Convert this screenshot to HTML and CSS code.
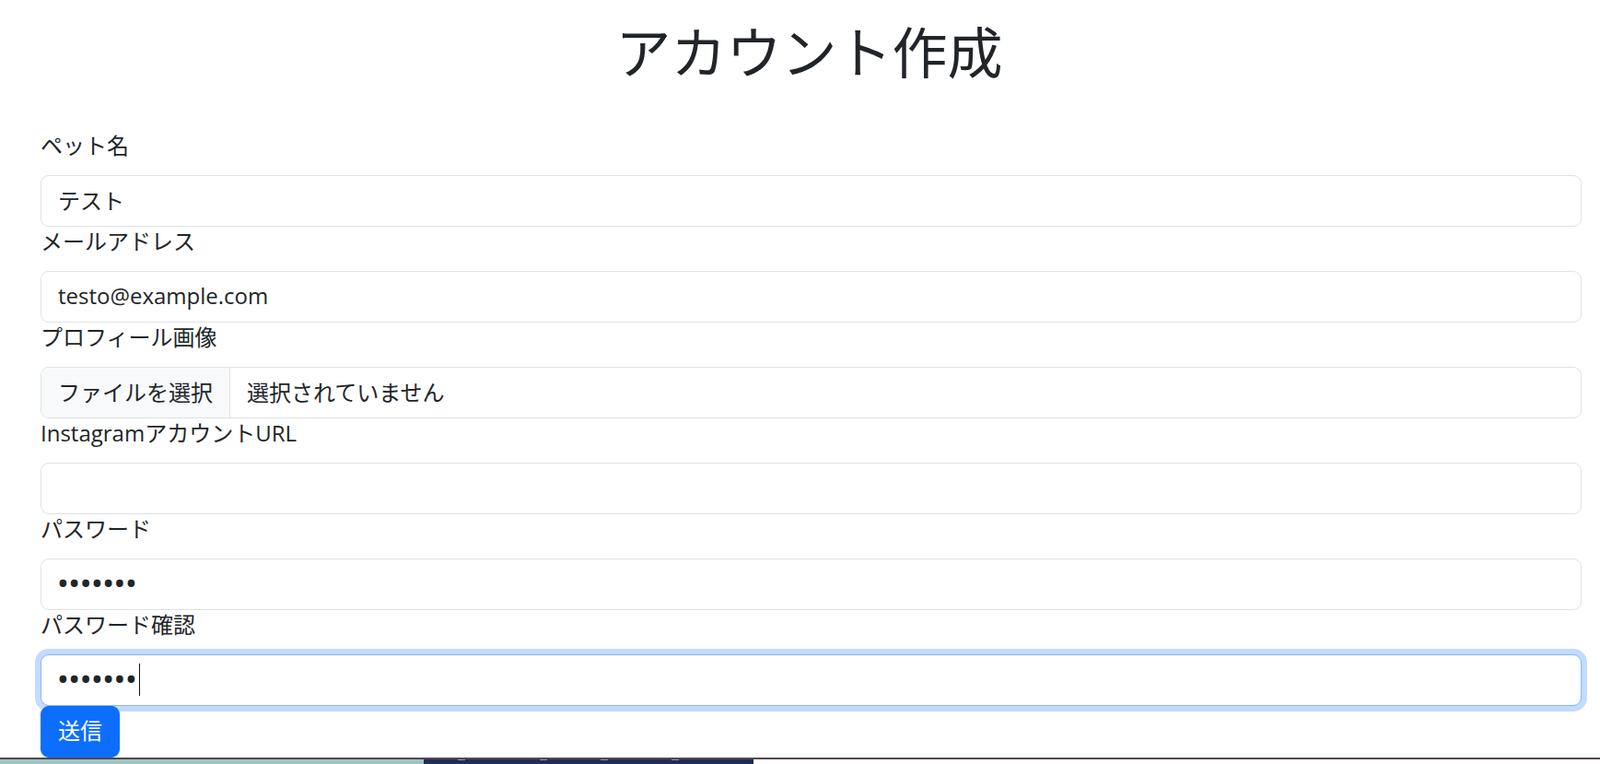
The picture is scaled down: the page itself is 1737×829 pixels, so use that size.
FILE: index.html
```html
<!DOCTYPE html>
<html lang="ja">
<head>
<meta charset="utf-8">
<title>アカウント作成</title>
<link rel="stylesheet" href="styles.css">
</head>
<body>
<h1 class="title">アカウント作成</h1>
<form class="form">
  <label class="label">ペット名</label>
  <input class="control" type="text" value="テスト">
  <label class="label">メールアドレス</label>
  <input class="control" type="email" value="testo@example.com">
  <label class="label">プロフィール画像</label>
  <div class="control file-input">
    <span class="file-btn">ファイルを選択</span>
    <span class="file-name">選択されていません</span>
  </div>
  <label class="label">InstagramアカウントURL</label>
  <input class="control" type="url" value="">
  <label class="label">パスワード</label>
  <input class="control pw" type="password" value="1234567">
  <label class="label">パスワード確認</label>
  <div class="focus-wrap">
    <input class="control pw focused" type="password" value="1234567">
    <span class="caret"></span>
  </div>
  <button class="btn" type="button">送信</button>
</form>
<div class="taskbar">
  <div class="tb-line"></div>
  <div class="tb-row">
    <div class="tb-teal"></div>
    <div class="tb-navy">
      <i class="m1"></i><i class="m2"></i><i class="m3"></i><i class="m4"></i>
    </div>
  </div>
</div>
</body>
</html>
```
FILE: styles.css
```css
html, body {
  margin: 0;
  padding: 0;
  background: #fff;
}
body {
  font-family: "Open Sans", "Noto Sans CJK JP", sans-serif;
  color: #212529;
  overflow: hidden;
}
.title {
  margin: 18px 0 0;
  padding-left: 20px;
  font-family: "Noto Sans CJK JP", sans-serif;
  font-size: 60px;
  line-height: 72px;
  font-weight: 400;
  text-align: center;
}
.form {
  margin: 52px 0 0;
  padding: 0 20px 0 44px;
}
.label {
  display: block;
  font-size: 24px;
  line-height: 32px;
  margin-bottom: 16px;
}
.control {
  display: block;
  box-sizing: border-box;
  width: 100%;
  height: 56px;
  margin: 0;
  padding: 0 18px 4px;
  border: 1px solid #dee2e6;
  border-radius: 9px;
  background: #fff;
  font-family: inherit;
  font-size: 24px;
  color: #212529;
  outline: none;
}
.pw {
  padding: 0 18px 0 17px;
  font-family: Roboto, sans-serif;
  font-size: 38px;
  letter-spacing: -0.5px;
}
.file-input {
  display: flex;
  align-items: stretch;
  padding: 0;
  overflow: hidden;
}
.file-btn {
  display: flex;
  align-items: center;
  padding: 0 18px 4px;
  background: #f8f9fa;
  border-right: 1px solid #dee2e6;
}
.file-name {
  display: flex;
  align-items: center;
  padding: 0 18px 4px;
}
.focus-wrap {
  position: relative;
}
.focused {
  border-color: #86b7fe;
  box-shadow: 0 0 0 6px rgba(13, 110, 253, 0.25);
}
.caret {
  position: absolute;
  left: 107px;
  top: 10px;
  width: 1px;
  height: 35px;
  background: #111;
}
.btn {
  display: block;
  position: relative;
  box-sizing: border-box;
  height: 56px;
  margin: 0;
  padding: 0 18px 2px;
  border: 1px solid #0d6efd;
  border-radius: 9px;
  background: #0d6efd;
  color: #fff;
  font-family: inherit;
  font-size: 24px;
  line-height: 36px;
}
.taskbar {
  height: 7px;
}
.tb-line {
  height: 2px;
  background: #5a4450;
}
.tb-row {
  display: flex;
  height: 5px;
}
.tb-teal {
  width: 460px;
  background: #9cc6c2;
}
.tb-navy {
  width: 358px;
  background: #1f2e55;
  display: flex;
  align-items: flex-start;
}
.tb-navy i {
  display: block;
  width: 8px;
  height: 1px;
  background: #8a93a8;
}
.tb-navy .m1 { margin-left: 37px; }
.tb-navy .m2 { margin-left: 81px; }
.tb-navy .m3 { margin-left: 58px; }
.tb-navy .m4 { margin-left: 69px; }
```
